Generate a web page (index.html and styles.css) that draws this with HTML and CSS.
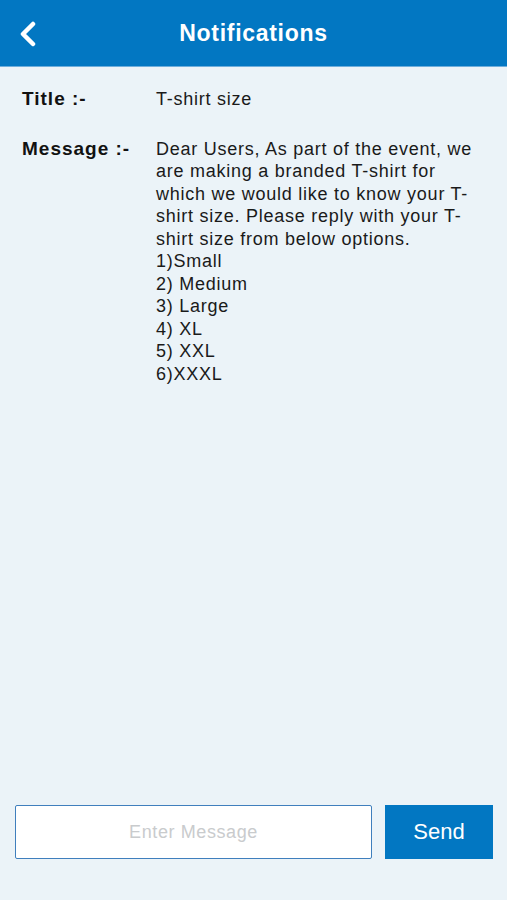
FILE: index.html
```html
<!DOCTYPE html>
<html lang="en">
<head>
  <meta charset="UTF-8">
  <meta name="viewport" content="width=device-width, initial-scale=1.0">
  <title>Notifications</title>
  <link rel="stylesheet" href="styles.css">
</head>
<body>
  <div class="screen">
    <!-- Top bar -->
    <header class="top-bar">
      <button class="back-btn" aria-label="Back">
        <svg width="20" height="26" viewBox="0 0 20 26">
          <path d="M15 3 L5 13 L15 23" fill="none" stroke="#fff" stroke-width="4.5" stroke-linecap="round" stroke-linejoin="round"/>
        </svg>
      </button>
      <h1 class="top-title">Notifications</h1>
    </header>

    <!-- Notification detail -->
    <main class="detail">
      <div class="detail-row">
        <div class="detail-label">Title :-</div>
        <div class="detail-value">T-shirt size</div>
      </div>
      <div class="detail-row">
        <div class="detail-label">Message :-</div>
        <div class="detail-value">Dear Users, As part of the event, we are making a branded T-shirt for which we would like to know your T-shirt size. Please reply with your T-shirt size from below options.<br>1)Small<br>2) Medium<br>3) Large<br>4) XL<br>5) XXL<br>6)XXXL</div>
      </div>
    </main>

    <!-- Reply box -->
    <form class="reply-form">
      <input type="text" class="reply-input" placeholder="Enter Message">
      <button type="submit" class="send-btn">Send</button>
    </form>
  </div>
</body>
</html>
```

FILE: styles.css
```css
html, body {
  margin: 0;
  padding: 0;
}
body {
  font-family: "Liberation Sans", Arial, sans-serif;
  background: #ebf3f8;
  color: #111;
}
.screen {
  display: flex;
  flex-direction: column;
  height: 900px;
}
.top-bar {
  position: relative;
  height: 66px;
  background: #0277c2;
  border-bottom: 1px solid #6eaedc;
  display: flex;
  align-items: center;
  justify-content: center;
  flex-shrink: 0;
}
.back-btn {
  position: absolute;
  left: 14px;
  top: 20px;
  background: none;
  border: none;
  padding: 0;
  width: 28px;
  height: 28px;
  display: flex;
  align-items: center;
  justify-content: center;
  cursor: pointer;
}
.top-title {
  margin: 0;
  color: #fff;
  font-size: 23px;
  font-weight: bold;
  letter-spacing: 0.7px;
}
.detail {
  flex: 1;
  padding: 21px 22px 0 22px;
}
.detail-row {
  display: flex;
  font-size: 18px;
  line-height: 22.5px;
  margin-bottom: 27px;
}
.detail-label {
  width: 134px;
  flex-shrink: 0;
  font-size: 19px;
  font-weight: bold;
  letter-spacing: 1px;
}
.detail-value {
  flex: 1;
  color: #1a1a1a;
  letter-spacing: 0.75px;
}
.reply-form {
  display: flex;
  gap: 13px;
  padding: 0 14px 41px 15px;
}
.reply-input {
  flex: 1;
  height: 54px;
  box-sizing: border-box;
  border: 1.5px solid #3f7fbd;
  border-radius: 2px;
  background: #fff;
  font-family: inherit;
  font-size: 18px;
  letter-spacing: 0.6px;
  text-align: center;
  outline: none;
}
.reply-input::placeholder {
  color: #c9cbcd;
}
.send-btn {
  width: 108px;
  height: 54px;
  border: none;
  background: #0277c2;
  color: #fff;
  font-family: inherit;
  font-size: 22px;
  cursor: pointer;
}
```
